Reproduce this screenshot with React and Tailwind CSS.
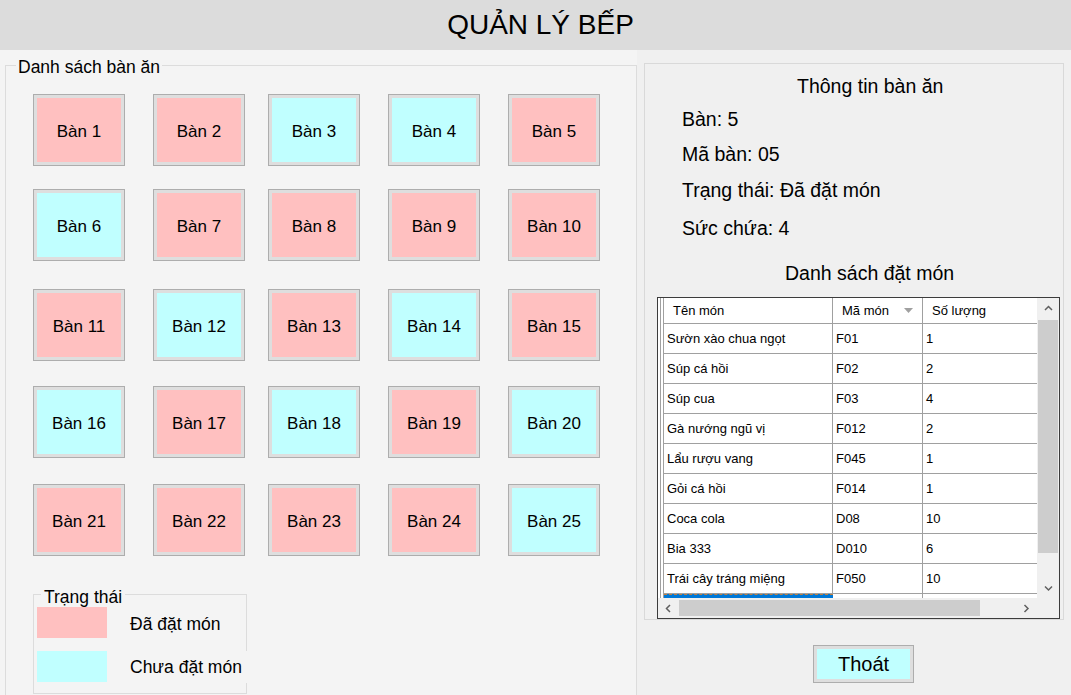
import React from "react";

const tables = [
  [1, "p"], [2, "p"], [3, "c"], [4, "c"], [5, "p"],
  [6, "c"], [7, "p"], [8, "p"], [9, "p"], [10, "p"],
  [11, "p"], [12, "c"], [13, "p"], [14, "c"], [15, "p"],
  [16, "c"], [17, "p"], [18, "c"], [19, "p"], [20, "c"],
  [21, "p"], [22, "p"], [23, "p"], [24, "p"], [25, "c"],
];

const orders = [
  ["Sườn xào chua ngọt", "F01", "1"],
  ["Súp cá hồi", "F02", "2"],
  ["Súp cua", "F03", "4"],
  ["Gà nướng ngũ vị", "F012", "2"],
  ["Lẩu rượu vang", "F045", "1"],
  ["Gỏi cá hồi", "F014", "1"],
  ["Coca cola", "D08", "10"],
  ["Bia 333", "D010", "6"],
  ["Trái cây tráng miệng", "F050", "10"],
];

function TableButton({ n, s }) {
  return (
    <div className="w-[92px] h-[72px] border border-[#adadad] bg-[#dedede] p-[3px]">
      <div
        className={
          "w-full h-full flex items-center justify-center pt-[3px] text-[17px] text-black " +
          (s === "p" ? "bg-[#ffc0c0]" : "bg-[#c0ffff]")
        }
      >
        Bàn {n}
      </div>
    </div>
  );
}

function Chevron({ dir }) {
  const pts = {
    up: "1,5 4.5,1.5 8,5",
    down: "1,1.5 4.5,5 8,1.5",
    left: "5,1 1.5,4.5 5,8",
    right: "1.5,1 5,4.5 1.5,8",
  }[dir];
  const w = dir === "up" || dir === "down" ? 9 : 7;
  const h = dir === "up" || dir === "down" ? 7 : 9;
  return (
    <svg width={w} height={h} viewBox={`0 0 ${w} ${h}`}>
      <polyline points={pts} fill="none" stroke="#606060" strokeWidth="1.5" />
    </svg>
  );
}

function RowHead() {
  return (
    <div className="w-[6px] h-full pl-[2px] border-r border-[#a0a0a0] shrink-0">
      <div className="h-full border-l border-[#a0a0a0]" />
    </div>
  );
}

export default function App() {
  return (
    <div className="w-[1071px] h-[695px] overflow-hidden bg-[#f0f0f0] flex flex-col font-['Liberation_Sans',Arial,sans-serif] text-black">
      <header className="h-[50px] shrink-0 bg-[#dcdcdc] flex items-center justify-center text-[28px] leading-none pl-[10px]">
        QUẢN LÝ BẾP
      </header>
      <div className="flex flex-1 min-h-0">
        {/* Left */}
        <div className="w-[637px] shrink-0 bg-[#f4f4f4] pt-[4px] pl-[5px]">
          <fieldset className="border border-[#dcdcdc] w-[632px] min-w-0 h-[660px] p-0 m-0">
            <legend className="ml-[10px] px-[2px] pt-[4px] text-[17.5px] leading-[18px]">
              Danh sách bàn ăn
            </legend>
            <div className="pt-[18px] pl-[27px]">
              <div className="grid grid-cols-[120px_115px_120px_120px_92px] grid-rows-[95px_100px_97px_98px_72px]">
                {tables.map(([n, s]) => (
                  <TableButton key={n} n={n} s={s} />
                ))}
              </div>
              <fieldset className="mt-[27px] w-[214px] min-w-0 border border-[#dcdcdc] p-0 m-0 pb-[10px]">
                <legend className="ml-[7px] px-[3px] pt-[5px] text-[17.5px] leading-[18px]">
                  Trạng thái
                </legend>
                <div className="pl-[3px] pt-[1px] flex flex-col">
                  <div className="flex items-center h-[31px]">
                    <div className="w-[70px] h-[31px] shrink-0 bg-[#ffc0c0]" />
                    <span className="ml-[23px] pt-[3px] text-[17.5px] whitespace-nowrap">Đã đặt món</span>
                  </div>
                  <div className="flex items-start h-[32px] mt-[13px]">
                    <div className="w-[70px] h-[31px] shrink-0 bg-[#c0ffff]" />
                    <span className="ml-[23px] w-[119px] h-[32px] shrink-0 flex items-center bg-[#f4f4f4] relative text-[17.5px] whitespace-nowrap">
                      Chưa đặt món
                    </span>
                  </div>
                </div>
              </fieldset>
            </div>
          </fieldset>
        </div>

        {/* Right */}
        <div className="flex-1 pl-[7px] pt-[13px] flex flex-col">
          <div className="w-[420px] h-[557px] border border-[#d9d9d9] flex flex-col text-[19.5px] leading-[22px]">
            <div className="mt-[11px] ml-[152px]">Thông tin bàn ăn</div>
            <div className="mt-[11px] ml-[37px]">Bàn: 5</div>
            <div className="mt-[13px] ml-[37px]">Mã bàn: 05</div>
            <div className="mt-[14px] ml-[37px]">Trạng thái: Đã đặt món</div>
            <div className="mt-[16px] ml-[37px]">Sức chứa: 4</div>
            <div className="mt-[23px] ml-[140px]">Danh sách đặt món</div>

            <div className="mt-[13px] ml-[12px] w-[403px] h-[322px] border border-[#3c3c3c] bg-white flex flex-col text-[13px] leading-none">
              <div className="flex h-[300px]">
                <div className="w-[379px] overflow-hidden flex flex-col">
                  <div className="flex h-[26px] shrink-0">
                    <RowHead />
                    <div className="w-[169px] shrink-0 border-r border-b border-[#a0a0a0] flex items-center pl-[9px]">
                      Tên món
                    </div>
                    <div className="w-[90px] shrink-0 border-r border-b border-[#a0a0a0] flex items-center pl-[9px] pr-[9px] justify-between">
                      <span>Mã món</span>
                      <svg width="9" height="5" viewBox="0 0 9 5">
                        <polygon points="0,0 9,0 4.5,5" fill="#a0a0a0" />
                      </svg>
                    </div>
                    <div className="flex-1 border-b border-[#a0a0a0] flex items-center pl-[9px]">
                      Số lượng
                    </div>
                  </div>
                  {orders.map(([a, b, c]) => (
                    <div key={a} className="flex h-[30px] shrink-0">
                      <RowHead />
                      <div className="w-[169px] shrink-0 border-r border-b border-[#a0a0a0] flex items-center pl-[3px] whitespace-nowrap">
                        {a}
                      </div>
                      <div className="w-[90px] shrink-0 border-r border-b border-[#a0a0a0] flex items-center pl-[3px]">
                        {b}
                      </div>
                      <div className="flex-1 border-b border-[#a0a0a0] flex items-center pl-[3px]">
                        {c}
                      </div>
                    </div>
                  ))}
                  <div className="flex flex-1">
                    <RowHead />
                    <div className="w-[169px] shrink-0 bg-[#0078d7] border-t border-dashed border-[#c08040]" />
                    <div className="w-[90px] shrink-0 border-r border-[#a0a0a0]" />
                    <div className="flex-1" />
                  </div>
                </div>
                <div className="w-[22px] bg-[#f0f0f0] flex flex-col">
                  <div className="h-[20px] flex items-center justify-center">
                    <Chevron dir="up" />
                  </div>
                  <div className="flex-1 px-[1px] pt-[2px]">
                    <div className="h-[233px] bg-[#cdcdcd]" />
                  </div>
                  <div className="h-[20px] flex items-center justify-center">
                    <Chevron dir="down" />
                  </div>
                </div>
              </div>
              <div className="flex h-[20px]">
                <div className="w-[379px] bg-[#f0f0f0] flex items-center justify-between">
                  <div className="w-[20px] h-full flex items-center justify-center">
                    <Chevron dir="left" />
                  </div>
                  <div className="flex-1 h-full py-[2px] pl-[1px] pr-[36px]">
                    <div className="h-full bg-[#cdcdcd]" />
                  </div>
                  <div className="w-[20px] h-full flex items-center justify-center mr-[1px]">
                    <Chevron dir="right" />
                  </div>
                </div>
                <div className="flex-1 bg-[#f0f0f0]" />
              </div>
            </div>
          </div>

          <div className="mt-[25px] ml-[169px] w-[101px] h-[38px] border border-[#adadad] bg-[#dedede] p-[3px]">
            <div className="w-full h-full bg-[#c0ffff] flex items-center justify-center text-[20px] leading-none">
              Thoát
            </div>
          </div>
        </div>
      </div>
    </div>
  );
}
